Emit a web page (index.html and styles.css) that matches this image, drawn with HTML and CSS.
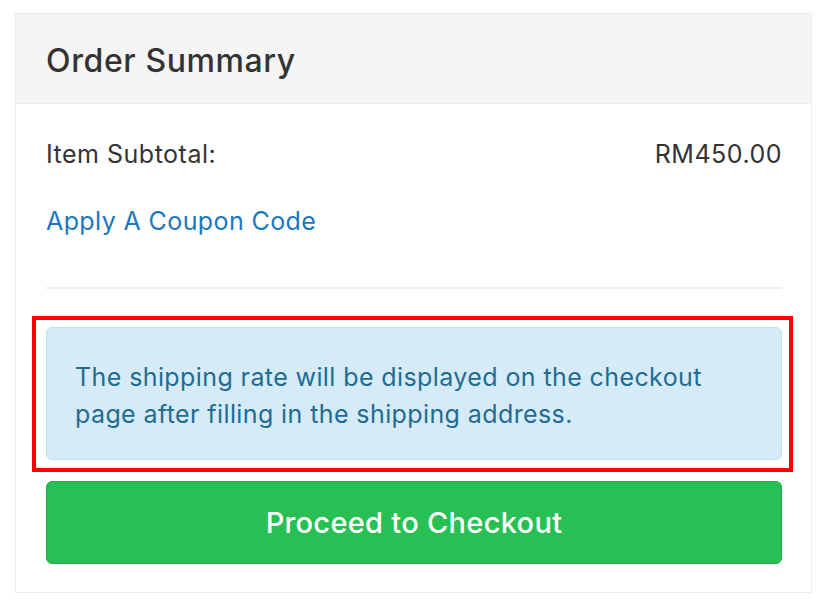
FILE: index.html
```html
<!DOCTYPE html>
<html>
<head>
<meta charset="utf-8">
<link rel="stylesheet" href="styles.css">
</head>
<body>
<div class="card">
  <div class="card-header">
    <h2 class="card-title">Order Summary</h2>
  </div>
  <div class="card-body">
    <div class="row">
      <span>Item Subtotal:</span>
      <span>RM450.00</span>
    </div>
    <a class="coupon" href="#">Apply A Coupon Code</a>
    <hr class="divider">
    <div class="alert">
      The shipping rate will be displayed on the checkout page after filling in the shipping address.
    </div>
    <button class="btn">Proceed to Checkout</button>
  </div>
</div>
</body>
</html>
```

FILE: styles.css
```css
* { box-sizing: border-box; }
html, body { margin: 0; padding: 0; background: #fff; }
body {
  font-family: Inter, "Noto Sans", sans-serif;
  color: #333;
  padding: 13px 13px 0 15px;
}
.card {
  width: 797px;
  border: 1px solid #ebebeb;
  background: #fff;
}
.card-header {
  height: 90px;
  background: #f5f5f5;
  border-bottom: 1px solid #ebebeb;
  display: flex;
  align-items: center;
  padding: 3px 30px 0;
}
.card-title {
  margin: 0;
  font-size: 32px;
  font-weight: 500;
  color: #333;
  letter-spacing: 0.6px;
}
.card-body {
  padding: 32px 29px 28px 30px;
  display: flex;
  flex-direction: column;
  font-size: 25px;
  line-height: 36px;
  letter-spacing: 0.5px;
}
.row {
  display: flex;
  justify-content: space-between;
}
.coupon {
  margin-top: 31px;
  color: #1b78c0;
  text-decoration: none;
  align-self: flex-start;
  letter-spacing: 0.4px;
}
.divider {
  margin: 48px 0 0;
  border: 0;
  border-top: 2px solid #eeeeee;
  height: 0;
}
.alert {
  position: relative;
  margin-top: 38px;
  background: #d5ebf7;
  border: 1px solid #b7e4f0;
  border-radius: 6px;
  color: #226c92;
  padding: 31px 28px 26px 28px;
  line-height: 37px;
  letter-spacing: 0.4px;
}
.alert::after {
  content: "";
  position: absolute;
  left: -15px;
  right: -12px;
  top: -12px;
  bottom: -13px;
  border: 4px solid #ff0000;
}
.btn {
  margin-top: 21px;
  height: 83px;
  background: #28c054;
  border: 1px solid #1fb049;
  border-radius: 6px;
  color: #fff;
  font-family: inherit;
  font-size: 29px;
  font-weight: 500;
  letter-spacing: 0.3px;
}
```
